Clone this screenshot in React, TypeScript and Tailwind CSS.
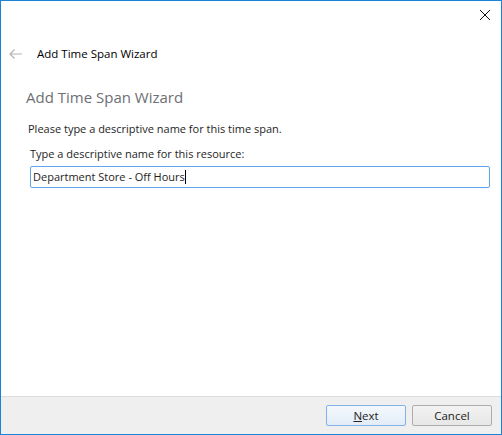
import React from "react";

export default function App() {
  const font = { fontFamily: '"Segoe UI", "Open Sans", "Noto Sans", sans-serif' };
  return (
    <div style={font} className="w-[502px] h-[435px] border border-[#1883d7] bg-white flex flex-col text-[#000]">
      <div className="h-[30px] flex justify-end items-start pr-[10px] pt-[8px]">
        <svg width="12" height="12" viewBox="0 0 12 12">
          <path d="M1 1 L11 11 M11 1 L1 11" stroke="#111" strokeWidth="1" />
        </svg>
      </div>
      <div className="h-[46px] flex items-center pl-[8px]">
        <svg width="14" height="10" viewBox="0 0 14 10">
          <path d="M1 5 H13 M5.5 0.5 L1 5 L5.5 9.5" stroke="#b4b4b4" strokeWidth="1.2" fill="none" />
        </svg>
        <span className="ml-[14px] text-[11.5px] leading-[16px]">Add Time Span Wizard</span>
      </div>
      <div className="flex flex-col pl-[25px] pr-[11px]">
        <div className="mt-[9px] text-[15px] leading-[22px] text-[#6d6f73]">Add Time Span Wizard</div>
        <div className="mt-[13px] pl-[2px] text-[11px] leading-[16px] text-[#1e1e1e]">Please type a descriptive name for this time span.</div>
        <div className="mt-[9px] pl-[4px] text-[11px] leading-[16px] text-[#1e1e1e]">Type a descriptive name for this resource:</div>
        <div className="mt-[4px] ml-[4px] h-[22px] border border-[#5ea5ea] rounded-[2px] flex items-center pl-[2px] text-[11px] text-[#1e1e1e]">
          <span>Department Store - Off Hours</span>
          <span className="w-px h-[14px] bg-black" />
        </div>
      </div>
      <div className="flex-1" />
      <div className="h-[38px] border-t border-[#dcdcdc] bg-[#efefef] flex justify-end items-start pt-[8px] pr-[9px] gap-[6px]">
        <button className="w-[80px] h-[21px] border border-[#7eb4ea] rounded-[2px] bg-gradient-to-b from-[#f4f8fc] to-[#e3edf8] text-[11.5px] leading-[19px] text-[#222]">
          <span className="underline">N</span>ext
        </button>
        <button className="w-[80px] h-[21px] border border-[#adadad] rounded-[2px] bg-gradient-to-b from-[#f2f2f2] to-[#e7e7e7] text-[11.5px] leading-[19px] text-[#222]">
          Cancel
        </button>
      </div>
    </div>
  );
}
